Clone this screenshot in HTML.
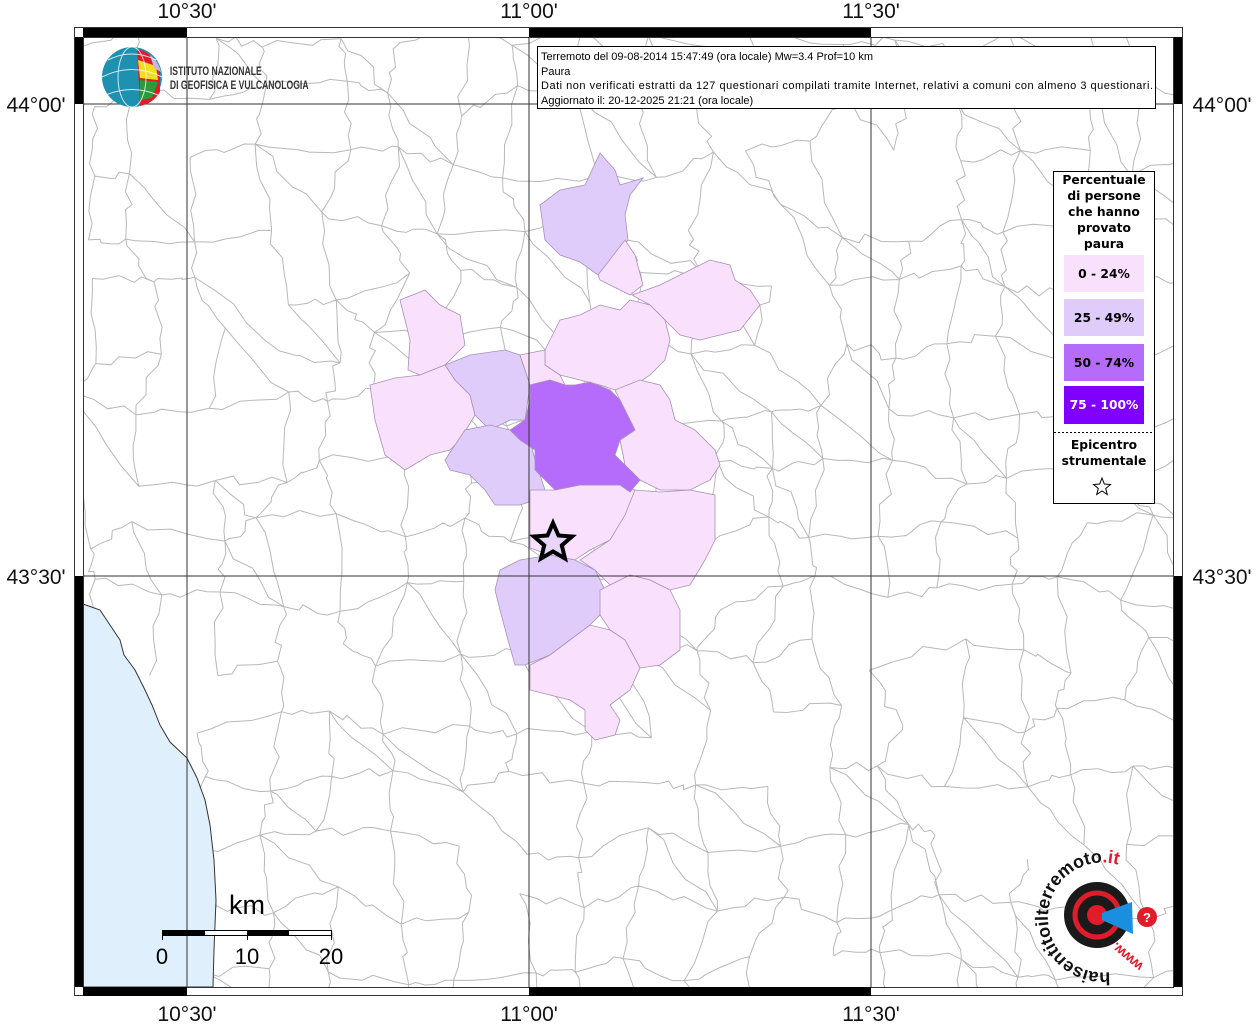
<!DOCTYPE html>
<html><head><meta charset="utf-8"><style>
html,body{margin:0;padding:0;background:#fff;width:1256px;height:1024px;overflow:hidden}
svg{display:block}
.lbl{font-family:"Liberation Sans",sans-serif;font-size:21px;fill:#111}
</style></head><body>
<svg id="s" width="1256" height="1024" viewBox="0 0 1256 1024" xmlns="http://www.w3.org/2000/svg">
<rect width="1256" height="1024" fill="#fff"/>
<g id="mesh" stroke="#b8b8b8" stroke-width="1" fill="none"></g>
<!-- sea -->
<path d="M83,604 L100,610 L110,625 L120,640 L124,655 L135,670 L145,690 L152,705 L160,725 L170,742 L187,758 L197,778 L205,800 L210,825 L214,860 L216,900 L214,950 L213,987 L83,987 Z" fill="#dff0fc" stroke="#333" stroke-width="1"/>
<!-- regions -->
<g stroke="#a890b8" stroke-width="0.8">
<path fill="#e0ccfa" d="M600,153 L615,170 L620,185 L643,178 L630,195 L625,215 L628,240 L610,262 L598,275 L580,262 L560,255 L545,240 L540,205 L560,190 L585,185 Z"/>
<path fill="#f9e0fc" d="M598,275 L625,240 L635,255 L643,285 L630,295 L620,290 L600,280 Z"/>
<path fill="#f9e0fc" d="M632,295 L660,285 L690,270 L710,260 L730,265 L735,280 L750,290 L760,305 L740,330 L720,335 L700,340 L680,335 L665,320 L650,305 Z"/>
<path fill="#f9e0fc" d="M545,350 L555,330 L560,320 L580,315 L600,305 L620,310 L630,300 L650,305 L665,320 L670,340 L665,360 L650,375 L635,385 L615,390 L600,385 L580,380 L560,375 L545,365 Z"/>
<path fill="#f9e0fc" d="M615,390 L640,380 L660,385 L670,400 L675,420 L695,430 L715,450 L720,465 L710,480 L690,490 L660,490 L640,480 L625,465 L620,440 L635,430 L620,400 Z"/>
<path fill="#f9e0fc" d="M400,300 L425,290 L440,305 L460,315 L465,345 L455,355 L445,365 L420,375 L408,370 L410,340 Z"/>
<path fill="#f9e0fc" d="M370,385 L395,378 L420,375 L445,365 L455,380 L470,395 L475,415 L460,440 L450,450 L430,455 L405,470 L385,455 L375,420 Z"/>
<path fill="#e0ccfa" d="M445,365 L470,355 L505,350 L520,355 L530,385 L525,420 L510,420 L490,430 L475,415 L470,395 L455,380 Z"/>
<path fill="#e0ccfa" d="M445,460 L455,445 L465,430 L490,425 L510,430 L530,440 L535,460 L540,475 L545,490 L535,500 L520,505 L495,505 L485,490 L470,475 L450,470 Z"/>
<path fill="#f9e0fc" d="M520,355 L545,350 L545,365 L560,375 L565,385 L550,380 L530,385 Z"/>
<path fill="#f9e0fc" d="M530,490 L555,490 L580,485 L620,485 L635,490 L630,510 L620,525 L610,540 L590,550 L575,560 L550,555 L530,548 Z"/>
<path fill="#f9e0fc" d="M635,490 L660,492 L690,490 L715,495 L715,540 L705,560 L690,585 L670,590 L650,580 L630,575 L610,585 L595,570 L580,560 L610,540 L625,515 Z"/>
<path fill="#e0ccfa" d="M500,570 L520,560 L550,555 L575,560 L595,570 L605,590 L600,615 L590,625 L570,640 L550,655 L525,665 L515,665 L508,640 L500,610 L495,590 Z"/>
<path fill="#f9e0fc" d="M600,590 L630,575 L650,580 L670,590 L680,610 L680,650 L660,665 L640,668 L625,640 L610,630 L600,615 Z"/>
<path fill="#f9e0fc" d="M530,665 L550,655 L570,640 L590,625 L610,630 L625,640 L640,668 L630,690 L610,705 L620,720 L615,735 L595,740 L585,730 L585,710 L570,700 L550,695 L530,690 Z"/>
<path fill="#b56cfa" d="M530,385 L550,380 L565,385 L575,385 L590,382 L610,390 L620,400 L630,420 L635,430 L620,440 L615,455 L625,465 L640,480 L630,492 L620,485 L580,485 L555,490 L545,480 L535,470 L535,450 L520,440 L510,430 L525,420 L530,400 Z"/>
</g>
<!-- grid -->
<g stroke="#333" stroke-width="1">
<line x1="187" y1="37" x2="187" y2="987"/><line x1="529" y1="37" x2="529" y2="987"/><line x1="871" y1="37" x2="871" y2="987"/>
<line x1="83" y1="104" x2="1173" y2="104"/><line x1="83" y1="576" x2="1173" y2="576"/>
</g>
<!-- frame -->
<rect x="74.5" y="27.5" width="1108" height="968" fill="none" stroke="#333"/>
<rect x="83.5" y="37.5" width="1090" height="950" fill="none" stroke="#333"/>
<g fill="#000">
<rect x="83" y="28" width="104" height="9"/><rect x="529" y="28" width="342" height="9"/>
<rect x="83" y="987" width="104" height="9"/><rect x="529" y="987" width="342" height="9"/>
<rect x="75" y="37" width="8" height="67"/><rect x="75" y="576" width="8" height="411"/>
<rect x="1174" y="37" width="8" height="67"/><rect x="1174" y="576" width="8" height="411"/>
</g>
<!-- labels -->
<g class="lbl" text-anchor="middle">
<text x="187" y="18">10°30'</text><text x="529" y="18">11°00'</text><text x="871" y="18">11°30'</text>
<text x="187" y="1021">10°30'</text><text x="529" y="1021">11°00'</text><text x="871" y="1021">11°30'</text>
<text x="36" y="112">44°00'</text><text x="36" y="584">43°30'</text>
<text x="1222" y="112">44°00'</text><text x="1222" y="584">43°30'</text>
</g>
<!-- title box -->
<rect x="537.5" y="46.5" width="618" height="62" fill="#fff" stroke="#000"/>
<g font-family="Liberation Sans,sans-serif" font-size="11" fill="#000">
<text x="541" y="60">Terremoto del 09-08-2014 15:47:49 (ora locale) Mw=3.4 Prof=10 km</text>
<text x="541" y="75">Paura</text>
<text x="541" y="89" textLength="612">Dati non verificati estratti da 127 questionari compilati tramite Internet, relativi a comuni con almeno 3 questionari.</text>
<text x="541" y="104">Aggiornato il: 20-12-2025 21:21 (ora locale)</text>
</g>
<!-- INGV logo -->
<circle cx="132" cy="77" r="30" fill="#1e90b0"/>
<path d="M137,49 A30,30 0 0 1 160,70 L160,92 A30,30 0 0 1 140,106 Z" fill="#e01b2a"/>
<path d="M138,60 L156,66 L158,80 L140,78 Z" fill="#f0e020"/>
<path d="M140,80 L158,82 L152,98 L140,100 Z" fill="#2a9a3a"/>
<path d="M150,55 A30,30 0 0 1 161,72 L154,68 Z" fill="#c8b8d8"/>
<g stroke="#fff" stroke-width="1" fill="none" opacity="0.8"><ellipse cx="132" cy="77" rx="14" ry="30"/><path d="M102,77 Q132,62 162,77"/><path d="M106,95 Q132,84 158,95"/><path d="M108,60 Q132,48 156,60"/></g>
<g font-family="Liberation Sans,sans-serif" font-size="12" font-weight="bold" fill="#333" transform="scale(0.72,1)">
<text x="236" y="75">ISTITUTO NAZIONALE</text><text x="236" y="89">DI GEOFISICA E VULCANOLOGIA</text>
</g>
<!-- legend -->
<rect x="1053.5" y="171.5" width="101" height="332" fill="#fff" stroke="#000"/>
<g font-family="DejaVu Sans,sans-serif" font-weight="bold" font-size="12.3" text-anchor="middle" fill="#000">
<text x="1104" y="184">Percentuale</text><text x="1104" y="200">di persone</text><text x="1104" y="216">che hanno</text><text x="1104" y="232">provato</text><text x="1104" y="248">paura</text>
<rect x="1064" y="255" width="80" height="37" fill="#f9e0fc"/><text x="1104" y="278">0 - 24%</text>
<rect x="1064" y="299" width="80" height="37" fill="#e0ccfa"/><text x="1104" y="322">25 - 49%</text>
<rect x="1064" y="344" width="80" height="37" fill="#b56cfa"/><text x="1104" y="367">50 - 74%</text>
<rect x="1064" y="386" width="80" height="38" fill="#7f00ff"/><text x="1104" y="409" fill="#fff">75 - 100%</text>
<text x="1104" y="449">Epicentro</text><text x="1104" y="465">strumentale</text>
</g>
<line x1="1054" y1="432.5" x2="1154" y2="432.5" stroke="#000" stroke-dasharray="2,2"/>
<path d="M1102,478 L1104.3,484 L1110.5,484.5 L1105.7,488.5 L1107.3,494.5 L1102,491 L1096.7,494.5 L1098.3,488.5 L1093.5,484.5 L1099.7,484 Z" fill="#fff" stroke="#000"/>
<!-- epicentre star -->
<path d="M553,523 L558.5,535.5 L572,536.5 L561.8,545.3 L565,558.5 L553,551.5 L541,558.5 L544.2,545.3 L534,536.5 L547.5,535.5 Z" fill="#e8d6fa" stroke="#000" stroke-width="4" stroke-linejoin="miter"/>
<!-- scale -->
<text x="247" y="914" font-family="Liberation Sans,sans-serif" font-size="27" text-anchor="middle" fill="#000">km</text>
<rect x="162.5" y="930.5" width="169" height="5" fill="#fff" stroke="#000"/>
<rect x="162" y="930" width="43" height="6" fill="#000"/><rect x="247" y="930" width="42" height="6" fill="#000"/>
<g stroke="#000"><line x1="162.5" y1="930" x2="162.5" y2="940"/><line x1="247.5" y1="930" x2="247.5" y2="940"/><line x1="331.5" y1="930" x2="331.5" y2="940"/></g>
<g font-family="Liberation Sans,sans-serif" font-size="22" text-anchor="middle" fill="#000">
<text x="162" y="964">0</text><text x="247" y="964">10</text><text x="331" y="964">20</text></g>
<!-- haisentito logo -->
<circle cx="1097" cy="915" r="33" fill="#1a1a1a"/>
<circle cx="1097" cy="915" r="22" fill="none" stroke="#e01b2a" stroke-width="5"/>
<circle cx="1097" cy="915" r="10" fill="#e01b2a"/>
<path d="M1102,913 L1132,902 L1133,934 L1102,920 Z" fill="#1a8fe0"/>
<circle cx="1147" cy="917" r="10" fill="#e01b2a"/><text x="1147" y="922" font-family="Liberation Sans,sans-serif" font-weight="bold" font-size="13" fill="#fff" text-anchor="middle">?</text>
<defs><path id="arc" d="M1110,972 A55,55 0 1 1 1148,886"/></defs>
<text font-family="Liberation Sans,sans-serif" font-size="18" font-weight="bold" fill="#111"><textPath href="#arc">haisentitoilterremoto<tspan fill="#e01b2a">.it</tspan></textPath></text>
<text x="1127" y="962" font-family="Liberation Sans,sans-serif" font-weight="bold" font-size="14" fill="#e01b2a" text-anchor="middle" transform="rotate(-140 1127 957)">www.</text>
</svg>
<script>
(function(){
var g=document.getElementById('mesh');var seed=7;function r(){seed=(seed*16807)%2147483647;return seed/2147483647;}
var sp=62,X0=83,Y0=37,nx=19,ny=17,P=[];
for(var j=0;j<=ny;j++){P[j]=[];for(var i=0;i<=nx;i++){P[j][i]=[X0+i*sp+(r()-0.5)*40,Y0+j*sp+(r()-0.5)*40];}}
function wob(a,b){var d='M'+a[0].toFixed(1)+','+a[1].toFixed(1);for(var k=1;k<=5;k++){var t=k/5;var x=a[0]+(b[0]-a[0])*t,y=a[1]+(b[1]-a[1])*t;if(k<5){x+=(r()-0.5)*10;y+=(r()-0.5)*10;}d+=' L'+x.toFixed(1)+','+y.toFixed(1);}return d;}
var d='';
for(var j=0;j<=ny;j++)for(var i=0;i<=nx;i++){var a=P[j][i];if(a[0]<200&&a[1]>600&&a[0]<190)continue;
if(i<nx&&r()<0.85)d+=wob(a,P[j][i+1]);if(j<ny&&r()<0.85)d+=wob(a,P[j+1][i]);if(i<nx&&j<ny&&r()<0.3)d+=wob(a,P[j+1][i+1]);}
var p=document.createElementNS('http://www.w3.org/2000/svg','path');p.setAttribute('d',d);g.appendChild(p);
var c=document.createElementNS('http://www.w3.org/2000/svg','clipPath');c.id='cl';var rc=document.createElementNS('http://www.w3.org/2000/svg','rect');rc.setAttribute('x',84);rc.setAttribute('y',38);rc.setAttribute('width',1089);rc.setAttribute('height',949);c.appendChild(rc);document.getElementById('s').appendChild(c);g.setAttribute('clip-path','url(#cl)');
})();
</script>
</body></html>
